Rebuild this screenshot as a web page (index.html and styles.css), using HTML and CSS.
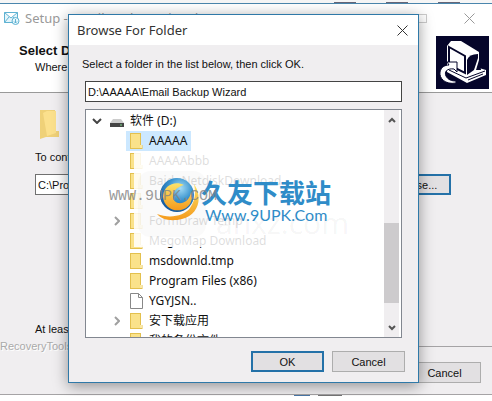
FILE: index.html
```
<!DOCTYPE html>
<html lang="en">
<head>
	<meta charset="UTF-8">
	<title>Browse For Folder</title>
	<link rel="stylesheet" href="styles.css">
</head>
<body>
	<svg class="defs" width="0" height="0">
		<symbol id="folder" viewBox="0 0 13 16">
			<path d="M0 0H11V12H12.500V16H0Z" fill="#e3c04e"/>
			<path d="M1 1H10V15H1Z" fill="#fae28a"/>
			<path d="M10 12H12V15H10Z" fill="#fbe9a5"/>
		</symbol>
		<symbol id="arrow" viewBox="0 0 6 10"><path d="M1 1L5 5L1 9" fill="none" stroke="#a0a0a0" stroke-width="2"/></symbol>
		<symbol id="close" viewBox="0 0 11 11"><path d="M.5.5L10.500 10.500M10.500.5L.5 10.500" fill="none" stroke="currentColor"/></symbol>
	</svg>

	<!-- setup window -->
	<div class="edge"><i></i><i></i><i></i></div>
	<div class="setup">
		<div class="setup-title">
			<svg class="mail" viewBox="0 0 16 13"><path d="M.5.5H13.500V10.500H.5ZM.5.5L7 6L13.500.5M.5 10.500L5 5M13.500 10.500L9 5" fill="#e4f5fb" stroke="#5fb2d2"/><circle cx="11.500" cy="9" r="3.500" fill="#e9f8fd" stroke="#5fb2d2"/><path d="M11.500 7V11M10 9.500L11.500 11L13 9.500" fill="none" stroke="#5fb2d2"/></svg>
			<span>Setup - Email Backup Wizard</span>
			<i class="max"></i>
			<svg class="x"><use href="#close"/></svg>
		</div>
		<div class="setup-head">
			<div>
				<h1>Select Destination Location</h1>
				<p>Where should it be installed?</p>
			</div>
			<svg class="pc" viewBox="0 0 53 53">
				<rect width="53" height="53" fill="#05052a"/>
				<path d="M11 10L15 5L25 5L43 16V32L50 34V39L31 47L11 36V28Z" fill="#fff"/>
				<path d="M13 11L29 20V37L13 29Z" fill="#fff" stroke="#05052a" stroke-width="2"/>
				<path d="M31 36V24Q33 18 42 18V22L38 34L31 39Z" fill="#05052a"/>
				<path d="M43 24L40 34L45 34Z" fill="#05052a"/>
				<path d="M13 34L30 42L49 35M32 44L47 38" fill="none" stroke="#05052a"/>
				<path d="M20 47C9 49 3 42 4 36C5 31 9 29 13 29L11 26H21V36L18 33C11 32 8 36 10 40C12 44 16 45 20 45Z" fill="#fff" stroke="#05052a"/>
			</svg>
		</div>
		<div class="setup-body">
			<svg class="big-folder" viewBox="0 0 20 30"><path d="M1 1H16V22H20V28H7L1 30Z" fill="#efd178"/><path d="M4 4L8 2H17V24L8 27Z" fill="#fbe08c"/></svg>
			<label for="dest">To continue, click Next.</label>
			<div class="dest">
				<input id="dest" type="text" value="C:\Program Files">
				<button type="button">Browse...</button>
			</div>
			<p class="space">At least 40 MB of free disk space is required.</p>
		</div>
		<div class="setup-foot">
			<span>RecoveryTools</span>
			<button type="button">Cancel</button>
		</div>
	</div>
	<div class="task"><i></i><i></i></div>

	<!-- folder dialog -->
	<div class="dialog">
		<div class="dialog-title">
			<span>Browse For Folder</span>
			<svg class="x"><use href="#close"/></svg>
		</div>
		<div class="dialog-body">
			<label for="path">Select a folder in the list below, then click OK.</label>
			<input id="path" type="text" value="D:\AAAAA\Email Backup Wizard">
			<div class="tree">
				<ul>
					<li class="drive">
						<svg class="down" viewBox="0 0 10 6"><path d="M1 1L5 5L9 1" fill="none" stroke="#444" stroke-width="2"/></svg>
						<svg class="disk" viewBox="0 0 14 8"><path d="M3 0H11L14 4H0Z" fill="#ccc"/><path d="M0 4H14V8H0Z" fill="#444"/><path d="M10 6H12" stroke="#7fdc8c"/></svg>
						<span>软件 (D:)</span>
					</li>
					<li><b></b><span class="item selected"><svg><use href="#folder"/></svg>AAAAA</span></li>
					<li><b></b><span class="item"><svg><use href="#folder"/></svg>AAAAAbbb</span></li>
					<li><b></b><span class="item"><svg><use href="#folder"/></svg>BaiduNetdiskDownload</span></li>
					<li><b></b><span class="item"><svg><use href="#folder"/></svg></span></li>
					<li><b><svg><use href="#arrow"/></svg></b><span class="item"><svg><use href="#folder"/></svg>FormDraw Temp</span></li>
					<li><b></b><span class="item"><svg><use href="#folder"/></svg>MegoMap Download</span></li>
					<li><b></b><span class="item"><svg><use href="#folder"/></svg>msdownld.tmp</span></li>
					<li><b></b><span class="item"><svg><use href="#folder"/></svg>Program Files (x86)</span></li>
					<li><b></b><span class="item"><svg viewBox="0 0 13 16"><path d="M.5.5H8.500L12.500 4.500V15.500H.5ZM8.500.5V4.500H12.500" fill="#fff" stroke="#888"/></svg>YGYJSN..</span></li>
					<li><b><svg><use href="#arrow"/></svg></b><span class="item"><svg><use href="#folder"/></svg>安下载应用</span></li>
					<li><b></b><span class="item"><svg><use href="#folder"/></svg>我的备份文件</span></li>
				</ul>
				<div class="scroll">
					<svg viewBox="0 0 8 6"><path d="M1 5L4 2L7 5" fill="none" stroke="#555" stroke-width="2"/></svg>
					<i></i>
					<svg viewBox="0 0 8 6"><path d="M1 1L4 4L7 1" fill="none" stroke="#555" stroke-width="2"/></svg>
				</div>
				<div class="mark">
					<i class="tile"></i>
					<span class="ghost">anxz.com</span>
					<svg class="logo" viewBox="0 0 44 44">
						<defs><radialGradient id="sea" cx=".6" cy=".3" r=".7"><stop offset="0" stop-color="#a5dcf5"/><stop offset=".5" stop-color="#3a94cf"/><stop offset="1" stop-color="#155a9e"/></radialGradient>
						<linearGradient id="sun" x2="0" y2="1"><stop offset="0" stop-color="#fbe36a"/><stop offset="1" stop-color="#f59a1c"/></linearGradient></defs>
						<circle cx="20" cy="18" r="17" fill="url(#sea)"/>
						<path d="M37 7C46 20 42 38 25 42C13 45 4 42 0 37C13 42 27 39 33 31C38 24 39 16 37 7Z" fill="url(#sun)"/>
						<path d="M27 8C16 3 6 10 6 20C7 31 19 37 29 31C35 27 36 19 34 15C33 22 28 27 21 26C14 24 13 12 27 8Z" fill="url(#sun)"/>
					</svg>
					<div class="brand"><strong>久友下载站</strong><em>Www.9UPK.Com</em></div>
					<span class="url">WWW.9UPK.COM</span>
				</div>
			</div>
			<div class="buttons">
				<button class="ok" type="button">OK</button>
				<button type="button">Cancel</button>
			</div>
		</div>
	</div>
</body>
</html>
```
FILE: styles.css
```
*{padding: 0;margin: 0;box-sizing: border-box;}
body{background: #fff;font: 11px/16px "Liberation Sans", Arial, sans-serif;color: #111;overflow: hidden;position: relative;}
svg{display: block;flex: none;}
input{height: 21px;border: 1px solid #707070;background: #fff;font: inherit;color: inherit;padding: 0 2px;}
button{width: 73px;height: 21px;border: 1px solid #adadad;background: #e2e0e2;font: inherit;color: inherit;}
.defs{position: absolute;}
.x{width: 11px;height: 11px;}

/* bits of the windows behind */
.edge{display: flex;justify-content: flex-end;gap: 30px;height: 3px;padding-right: 32px;background: #f6f6f6;}
.edge i{width: 22px;border-bottom: 1px solid #667;}
.task{display: flex;justify-content: flex-end;gap: 8px;padding-right: 150px;}
.task i{width: 24px;height: 1px;background: #777;}
.task i:first-child{width: 16px;background: #4a78a8;}

.setup{background: #f0eef0;border-top: 1px solid #4a86ad;border-bottom: 1px solid #a5a3a5;}
.setup-title{display: flex;align-items: center;height: 32px;padding: 0 17px 4px 4px;background: #fff;color: #999;font: 13px/20px "Noto Sans", "Noto Sans CJK SC", sans-serif;}
.setup-title span{flex: 1;padding-left: 5px;}
.mail{width: 16px;height: 13px;}
.max{width: 9px;height: 9px;border: 1px solid #ccc;margin-right: 37px;}
.setup-head{display: flex;justify-content: space-between;height: 57px;padding: 0 3px 0 19px;background: #fff;border-bottom: 1px solid #999;}
.setup-head h1{font-size: 13px;line-height: 16px;margin-top: 7px;}
.setup-head p{padding-left: 16px;}
.pc{width: 53px;height: 53px;}
.setup-body{height: 254px;padding: 16px 41px 0 35px;border-bottom: 1px solid #a5a3a5;}
.big-folder{width: 20px;height: 30px;margin-left: 4px;}
.setup-body label{display: block;margin-top: 10px;}
.dest{display: flex;justify-content: space-between;margin-top: 9px;}
.dest input{width: 280px;}
.dest button{border: 2px solid #2471a8;}
.space{margin-top: 126px;}
.setup-foot{display: flex;justify-content: space-between;align-items: flex-start;height: 47px;padding: 15px 11px 0 0;}
.setup-foot span{color: #aaa;background: #f0eef0;margin-top: -24px;text-shadow: 1px 1px #fff;}

.dialog{position: absolute;left: 68px;right: 73px;top: 14px;background: #f0eef0;border: 1px solid #2f79a8;box-shadow: 0 3px 14px rgba(0,0,0,.4);}
.dialog-title{display: flex;align-items: center;justify-content: space-between;height: 30px;padding: 0 10px 0 8px;background: #fff;color: #333;font: 13px/20px "Noto Sans", "Noto Sans CJK SC", sans-serif;}
.dialog-body{padding: 11px 16px 10px;}
.dialog-body label{display: block;margin-left: -3px;}
#path{display: block;width: 100%;margin-top: 9px;border-color: #444;}
.tree{display: flex;position: relative;height: 229px;margin-top: 7px;background: #fff;border: 1px solid #828790;font: 12px/20px "Noto Sans", "Noto Sans CJK SC", sans-serif;}
.tree ul{flex: 1;list-style: none;overflow: hidden;padding-top: 1px;}
.tree li{display: flex;align-items: center;height: 20px;padding-left: 26px;}
.tree .drive{padding-left: 6px;}
.down{width: 10px;height: 6px;}
.disk{width: 14px;height: 8px;margin: 4px 6px 0 8px;}
.tree b{width: 14px;padding-left: 2px;}
.tree b svg{width: 6px;height: 10px;}
.item{display: flex;align-items: center;height: 20px;padding: 0 4px;white-space: nowrap;}
.item svg{width: 13px;height: 16px;margin-right: 6px;}
.selected{background: #cce8ff;}
.scroll{display: flex;flex-direction: column;align-items: center;width: 15px;margin-right: 2px;padding: 7px 0 6px;background: #f0eef0;}
.scroll svg{width: 8px;height: 6px;}
.scroll i{width: 15px;height: 80px;background: #cdcbcd;margin: 100px 0 auto;}

/* watermark over the list */
.mark{position: absolute;left: 48px;top: 43px;width: 226px;height: 94px;background: rgba(255,255,255,.86);}
.tile{position: absolute;left: 4px;top: 18px;width: 68px;height: 66px;border-radius: 12px;background: rgba(0,0,0,.02);}
.ghost{position: absolute;left: 82px;top: 50px;font: 30px/40px "Open Sans", sans-serif;color: rgba(0,0,0,.05);}
.url{position: absolute;left: -25px;top: 34px;font: 15px/20px "Liberation Mono", monospace;color: rgba(130,130,130,.8);}
.logo{position: absolute;left: 23px;top: 24px;width: 44px;height: 44px;}
.brand{position: absolute;left: 67px;top: 24px;color: #2f8cc8;white-space: nowrap;}
.brand strong{display: block;font: bold 26px/30px "Noto Sans CJK SC", sans-serif;}
.brand em{display: block;padding-left: 4px;font: 16px/16px Lato, sans-serif;}

.buttons{display: flex;justify-content: flex-end;gap: 8px;margin: 13px -3px 0 0;}
.ok{border: 2px solid #2471a8;}
```
